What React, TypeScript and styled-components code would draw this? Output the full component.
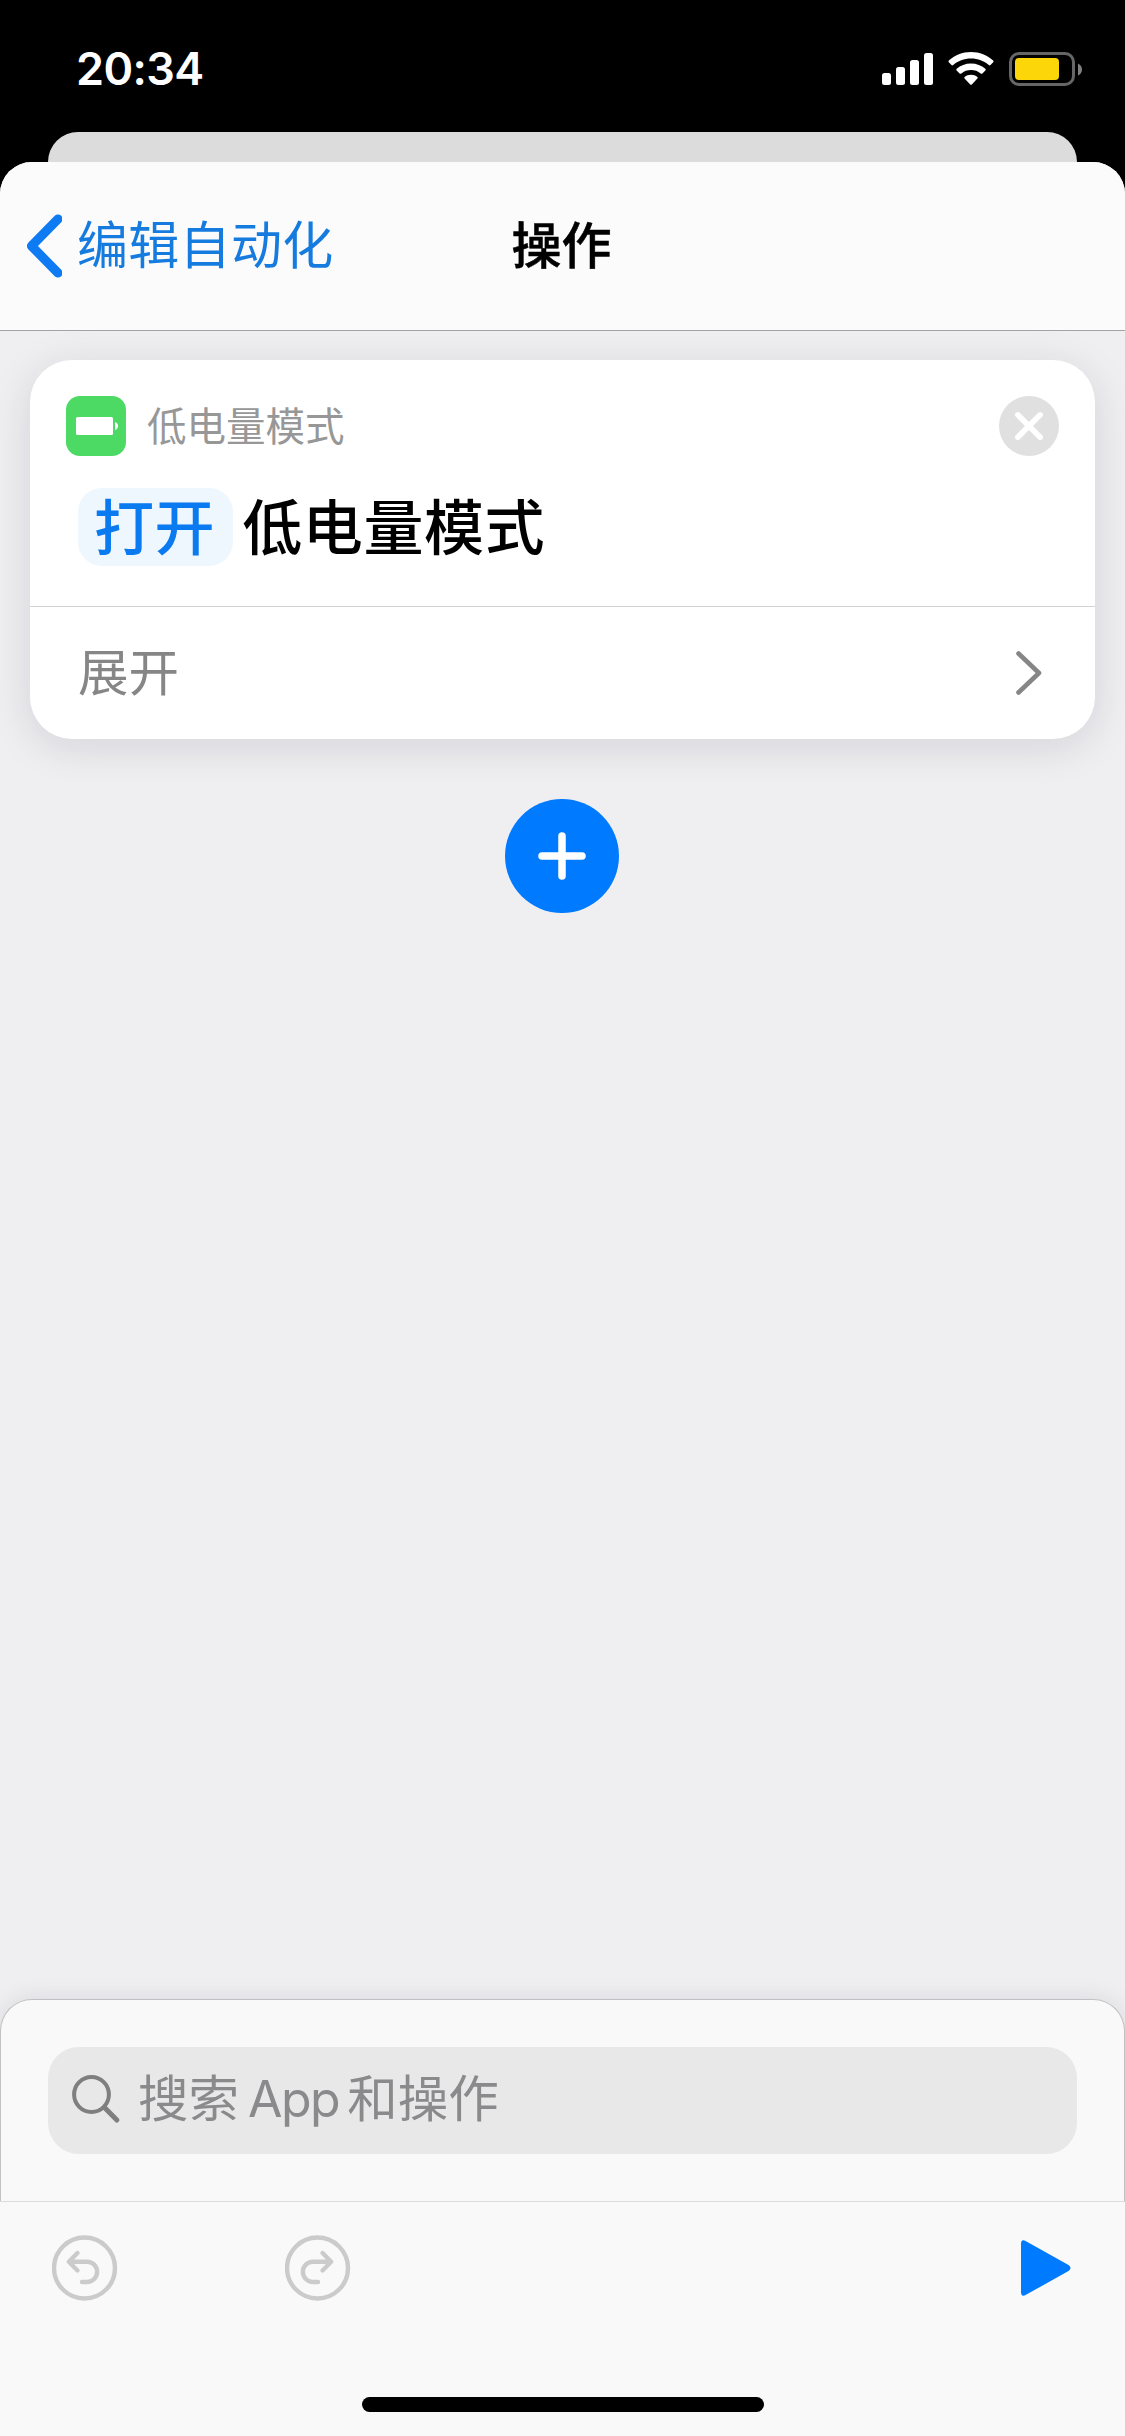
import React from 'react';
import styled, { createGlobalStyle } from 'styled-components';

const GlobalStyle = createGlobalStyle`
  *, *::before, *::after { box-sizing: border-box; }
  html, body { margin: 0; padding: 0; background: #000; }
  button { border: 0; padding: 0; margin: 0; background: none; font: inherit; color: inherit; }
  svg { display: block; flex: none; }
`;

const Screen = styled.div`
  width: 1125px;
  height: 2436px;
  display: flex;
  flex-direction: column;
  overflow: hidden;
  background: #000;
  font-family: Inter, 'Noto Sans CJK SC', sans-serif;
`;

const StatusBar = styled.header`
  height: 132px;
  flex: none;
  display: flex;
  justify-content: space-between;
  padding: 52px 43px 0 76px;
`;

const Clock = styled.time`
  height: 34px;
  line-height: 34px;
  font-size: 45px;
  font-weight: 600;
  letter-spacing: -0.6px;
  color: #fff;
`;

const StatusIcons = styled.div`
  display: flex;
  align-items: flex-start;
  gap: 15px;
`;

const BackSheet = styled.div`
  height: 30px;
  flex: none;
  margin: 0 48px;
  border-radius: 30px 30px 0 0;
  background: #dcdcdc;
`;

const Sheet = styled.main`
  flex: 1;
  display: flex;
  flex-direction: column;
  overflow: hidden;
  border-radius: 32px 32px 0 0;
  background: #efeff1;
`;

const NavBar = styled.nav`
  height: 169px;
  flex: none;
  display: grid;
  grid-template-columns: 1fr auto 1fr;
  align-items: center;
  padding: 0 28px 0 26px;
  background: #fbfbfb;
  border-bottom: 1px solid #a3a3a5;
`;

const BackButton = styled.button`
  display: flex;
  align-items: center;
  gap: 15px;
  color: #157bdf;
  font-size: 51px;
  line-height: 60px;
  letter-spacing: 0.3px;
`;

const NavTitle = styled.h1`
  margin: 0;
  font-size: 50px;
  line-height: 60px;
  font-weight: 500;
  color: #000;
  -webkit-text-stroke: 0.5px #000;
`;

const Canvas = styled.section`
  flex: 1;
  display: flex;
  flex-direction: column;
  align-items: center;
  gap: 60px;
  padding: 29px 30px 0;
`;

const Card = styled.article`
  width: 100%;
  height: 379px;
  display: flex;
  flex-direction: column;
  border-radius: 42px;
  background: #fff;
  box-shadow: 0 8px 42px rgba(30, 30, 70, 0.13);
`;

const CardHead = styled.div`
  height: 60px;
  flex: none;
  display: flex;
  align-items: center;
  margin: 36px 36px 0;
`;

const CardLabel = styled.span`
  flex: 1;
  margin-left: 21px;
  font-size: 39.5px;
  line-height: 48px;
  padding-top: 1px;
  color: #979797;
`;

const Statement = styled.div`
  height: 150px;
  flex: none;
  display: flex;
  align-items: flex-start;
  gap: 9px;
  padding: 32px 48px 0;
  font-size: 60px;
  line-height: 80px;
  font-weight: 500;
  letter-spacing: 0.6px;
  color: #000;
`;

const Token = styled.span`
  height: 78px;
  padding: 0 18px 0 16px;
  border-radius: 24px;
  background: #eff7fe;
  color: #0a7af0;
`;

const ExpandRow = styled.button`
  flex: 1;
  display: flex;
  align-items: center;
  justify-content: space-between;
  padding: 0 53px 0 48px;
  border-top: 1px solid #d3d3d5;
  font-size: 50.5px;
  line-height: 60px;
  color: #868686;
`;

const AddButton = styled.button`
  width: 114px;
  height: 114px;
  display: grid;
  place-items: center;
  margin-right: 1px;
  border-radius: 50%;
  background: #007aff;
`;

const SearchPanel = styled.section`
  height: 202px;
  flex: none;
  padding: 47px 47px 0;
  border: 1px solid #c0c0c5;
  border-bottom: 0;
  border-radius: 32px 32px 0 0;
  background: #f9f9f9;
  box-shadow: 0 0 24px rgba(30, 30, 70, 0.1);
`;

const SearchField = styled.div`
  height: 107px;
  display: flex;
  align-items: center;
  gap: 18px;
  padding: 0 24px 3px;
  border-radius: 31px;
  background: #e8e8e8;
  color: #8a8a8c;
  font-size: 50.5px;
`;

const SearchHint = styled.span`
  display: flex;
  line-height: 60px;
`;

const Latin = styled.span`
  margin: 0 8px 0 9px;
  font-size: 50px;
  letter-spacing: -1.5px;
`;

const Toolbar = styled.footer`
  position: relative;
  height: 235px;
  flex: none;
  display: flex;
  align-items: flex-start;
  padding: 33px 54px 0 52px;
  border-top: 1px solid #dcdcde;
  background: #f9f9f9;
`;

const ToolButton = styled.button<{ $before?: string }>`
  height: 66px;
  display: flex;
  align-items: center;
  margin-left: ${({ $before }) => $before ?? '0'};
`;

const HomeIndicator = styled.div`
  position: absolute;
  left: 362px;
  bottom: 24px;
  width: 402px;
  height: 15px;
  border-radius: 8px;
  background: #000;
`;

const SignalIcon = () => (
  <svg width="51" height="34" viewBox="0 0 51 34" fill="#fff">
    <rect x="0" y="21" width="9" height="12" rx="2.5" />
    <rect x="14" y="15" width="9" height="18" rx="2.5" />
    <rect x="28" y="8" width="9" height="25" rx="2.5" />
    <rect x="42" y="1" width="9" height="32" rx="2.5" />
  </svg>
);

const WifiIcon = () => (
  <svg width="46" height="34" viewBox="0 0 46 34" fill="#fff">
    <path d="M23 0C14.400 0 6.600 3.300 .8 8.600Q0 9.500 .8 10.300L3.500 13Q4.300 13.800 5.200 13C9.900 8.900 16.100 6.500 23 6.500S36.100 8.900 40.800 13Q41.700 13.800 42.500 13L45.200 10.300Q46 9.500 45.200 8.600C39.400 3.300 31.600 0 23 0Z" />
    <path d="M23 11.500C17.500 11.500 12.500 13.500 8.700 16.800Q7.800 17.600 8.600 18.400L11.600 21.400Q12.400 22.200 13.300 21.400C16 19.200 19.300 18 23 18S30 19.200 32.700 21.400Q33.600 22.200 34.400 21.400L37.400 18.400Q38.200 17.600 37.300 16.800C33.500 13.500 28.500 11.500 23 11.500Z" />
    <path d="M23 22.700C20.500 22.700 18.300 23.500 16.600 24.900Q15.800 25.700 16.600 26.500L22.200 32.400Q23 33.200 23.800 32.400L29.400 26.500Q30.200 25.700 29.400 24.900C27.700 23.500 25.500 22.700 23 22.700Z" />
  </svg>
);

const BatteryIcon = () => (
  <svg width="73" height="34" viewBox="0 0 73 34">
    <rect x="1.500" y="1.500" width="63" height="31" rx="8.500" fill="none" stroke="#666" strokeWidth="3" />
    <rect x="6" y="6" width="44" height="22" rx="4" fill="#fdd60a" />
    <path d="M69 11.500Q73 13.500 73 17.500T69 23.500Z" fill="#808080" />
  </svg>
);

const BackChevron = () => (
  <svg width="36" height="64" viewBox="0 0 36 64" fill="none" stroke="#0f7bf2" strokeWidth="9.200" strokeLinecap="round" strokeLinejoin="round">
    <path d="M32 5L5.500 32L32 59" />
  </svg>
);

const LowPowerIcon = () => (
  <svg width="60" height="60" viewBox="0 0 60 60">
    <rect width="60" height="60" rx="14" fill="#4cd964" />
    <rect x="10" y="21" width="37" height="18" rx="1.500" fill="#fff" />
    <path d="M49 26Q52 27 52 30T49 34Z" fill="#fff" />
  </svg>
);

const CloseIcon = () => (
  <svg width="60" height="60" viewBox="0 0 60 60">
    <circle cx="30" cy="30" r="30" fill="#e0e0e1" />
    <path d="M18.800 18.800L41.200 41.200M41.200 18.800L18.800 41.200" stroke="#fff" strokeWidth="5.500" strokeLinecap="round" />
  </svg>
);

const ForwardChevron = () => (
  <svg width="26" height="44" viewBox="0 0 26 44" fill="none" stroke="#868686" strokeWidth="4.600" strokeLinecap="round" strokeLinejoin="round">
    <path d="M2.500 2.500L23 22L2.500 41.500" />
  </svg>
);

const PlusIcon = () => (
  <svg width="48" height="48" viewBox="0 0 48 48" stroke="#fff" strokeWidth="7.500" strokeLinecap="round">
    <path d="M24 4V44M4 24H44" />
  </svg>
);

const SearchIcon = () => (
  <svg width="48" height="48" viewBox="0 0 48 48" fill="none" stroke="#7f7f80" strokeLinecap="round">
    <circle cx="19.500" cy="19.500" r="17.400" strokeWidth="4" />
    <path d="M32.500 32.500L44.800 45" strokeWidth="5" />
  </svg>
);

const TurnIcon = ({ forward = false }: { forward?: boolean }) => (
  <svg width="66" height="66" viewBox="0 0 66 66" fill="none" stroke="#cbcbcb" strokeWidth="4.400" strokeLinecap="round" strokeLinejoin="round">
    <circle cx="32.500" cy="33" r="30.500" />
    <g transform={forward ? 'matrix(-1 0 0 1 63 0)' : undefined}>
      <path d="M25.500 18L16.800 26.700L25.500 35.500M17.500 26.700H35A10.100 10.100 0 0 1 35 47H30" />
    </g>
  </svg>
);

const PlayIcon = () => (
  <svg width="50" height="56" viewBox="0 0 50 56" fill="#007aff">
    <path d="M0 4Q0 -1.500 5 1.200L47.500 25Q51.500 28 47.500 31L5 54.800Q0 57.500 0 52Z" />
  </svg>
);

export default function App() {
  return (
    <>
      <GlobalStyle />
      <Screen>
        <StatusBar>
          <Clock>20:34</Clock>
          <StatusIcons>
            <SignalIcon />
            <WifiIcon />
            <BatteryIcon />
          </StatusIcons>
        </StatusBar>
        <BackSheet />
        <Sheet>
          <NavBar>
            <BackButton>
              <BackChevron />
              编辑自动化
            </BackButton>
            <NavTitle>操作</NavTitle>
          </NavBar>
          <Canvas>
            <Card>
              <CardHead>
                <LowPowerIcon />
                <CardLabel>低电量模式</CardLabel>
                <CloseIcon />
              </CardHead>
              <Statement>
                <Token>打开</Token>
                <span>低电量模式</span>
              </Statement>
              <ExpandRow>
                <span>展开</span>
                <ForwardChevron />
              </ExpandRow>
            </Card>
            <AddButton aria-label="添加">
              <PlusIcon />
            </AddButton>
          </Canvas>
          <SearchPanel>
            <SearchField>
              <SearchIcon />
              <SearchHint>
                搜索<Latin>App</Latin>和操作
              </SearchHint>
            </SearchField>
          </SearchPanel>
          <Toolbar>
            <ToolButton>
              <TurnIcon />
            </ToolButton>
            <ToolButton $before="167px">
              <TurnIcon forward />
            </ToolButton>
            <ToolButton $before="auto">
              <PlayIcon />
            </ToolButton>
            <HomeIndicator />
          </Toolbar>
        </Sheet>
      </Screen>
    </>
  );
}
